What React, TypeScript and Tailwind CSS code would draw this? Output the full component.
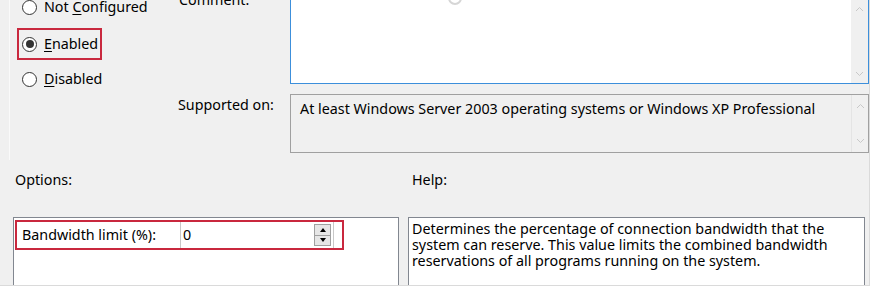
import React from "react";

const Radio = ({ checked }: { checked?: boolean }) => (
  <span className="flex h-[15px] w-[15px] shrink-0 items-center justify-center rounded-full border border-[#333333] bg-white">
    {checked && <span className="h-[8px] w-[8px] rounded-full bg-[#333333]" />}
  </span>
);

const Chevron = ({ up }: { up?: boolean }) => (
  <svg width="9" height="6" viewBox="0 0 9 6" className="block">
    <path
      d={up ? "M1 5 L4.5 1.5 L8 5" : "M1 1 L4.5 4.5 L8 1"}
      fill="none"
      stroke="#c8c8c8"
      strokeWidth="1"
    />
  </svg>
);

const Spinner = () => (
  <div className="flex h-[22px] w-[17px] shrink-0 flex-col border border-[#a0a0a0] bg-[#e6e6e6]">
    <div className="flex flex-1 items-center justify-center border-b border-[#a0a0a0]">
      <span className="h-0 w-0 border-x-[3.5px] border-b-[4px] border-x-transparent border-b-black" />
    </div>
    <div className="flex flex-1 items-center justify-center">
      <span className="h-0 w-0 border-x-[3.5px] border-t-[4px] border-x-transparent border-t-black" />
    </div>
  </div>
);

export default function App() {
  return (
    <div className="h-[295px] w-[877px] overflow-hidden bg-white font-['Noto_Sans',sans-serif] text-[14.3px] leading-[16px] text-black">
      <div className="h-[286px] w-[870px] overflow-hidden border-b border-r border-[#dadada] bg-[#f0f0f0]">
        {/* top: state + comment + supported */}
        <div className="flex h-[160px]">
          <div className="w-[178px] border-l border-transparent pl-[8px]">
            <div className="h-full border-l border-[#fafafa]">
              <div className="flex h-[14px] items-center gap-[7px] pl-[12px]">
                <Radio />
                <span className="whitespace-nowrap leading-[14px]">
                  Not <u className="decoration-1 underline-offset-2">C</u>onfigured
                </span>
              </div>
              <div className="ml-[7px] mt-[14px] flex h-[32px] w-[85px] items-center gap-[7px] border-2 border-[#c9283e] pl-[3px]">
                <Radio checked />
                <span className="whitespace-nowrap">
                  <u className="decoration-1 underline-offset-2">E</u>nabled
                </span>
              </div>
              <div className="mt-[8px] flex h-[22px] items-center gap-[7px] pl-[12px]">
                <Radio />
                <span className="whitespace-nowrap">
                  <u className="decoration-1 underline-offset-2">D</u>isabled
                </span>
              </div>
            </div>
          </div>

          <div className="flex flex-1 flex-col">
            <div className="mt-[-10px] flex h-[94px]">
              <div className="w-[112px] pl-[1px] pt-[2px]">Comment:</div>
              <div className="relative flex flex-1 border-x border-b border-[#3c8fdb] bg-white">
                <div className="flex-1" />
                <span className="absolute left-[157px] top-[1px] h-[14px] w-[14px] rounded-full border-2 border-[#d6d6d6]" />
                <div className="flex w-[17px] flex-col items-center justify-between bg-[#f0f0f0] pb-[6px] pt-[16px]">
                  <Chevron up />
                  <Chevron />
                </div>
              </div>
            </div>

            <div className="mt-[10px] flex h-[59px]">
              <div className="w-[112px] pt-[3px]">Supported on:</div>
              <div className="flex flex-1 border border-[#a0a0a0] bg-[#f0f0f0]">
                <div className="flex-1 pl-[9px] pt-[6px]">
                  At least Windows Server 2003 operating systems or Windows XP Professional
                </div>
                <div className="flex w-[17px] flex-col items-center justify-between border-l border-[#e4e4e4] pb-[8px] pt-[8px]">
                  <Chevron up />
                  <Chevron />
                </div>
              </div>
            </div>
          </div>
        </div>

        {/* options + help */}
        <div className="flex">
          <div className="w-[408px] pl-[15px] pt-[12px]">Options:</div>
          <div className="pl-[4px] pt-[12px]">Help:</div>
        </div>

        <div className="mt-[29px] flex">
          <div className="ml-[13px] h-[120px] w-[386px] border border-[#828790] bg-white">
            <div className="ml-[1px] mt-[2px] flex h-[30px] w-[329px] border-2 border-[#c9283e]">
              <div className="flex w-[163px] items-center whitespace-nowrap pl-[5px]">Bandwidth limit (%):</div>
              <div className="flex w-[154px] items-center border-x border-[#c8c8c8] pl-[2px] pr-[2px]">
                <span className="flex-1">0</span>
                <Spinner />
              </div>
            </div>
          </div>
          <div className="ml-[9px] h-[120px] w-[457px] border border-[#828790] bg-white pl-[3px] pr-[8px] pt-[3px]">
            Determines the percentage of connection bandwidth that the system can reserve. This value
            limits the combined bandwidth reservations of all programs running on the system.
          </div>
        </div>
      </div>
    </div>
  );
}
